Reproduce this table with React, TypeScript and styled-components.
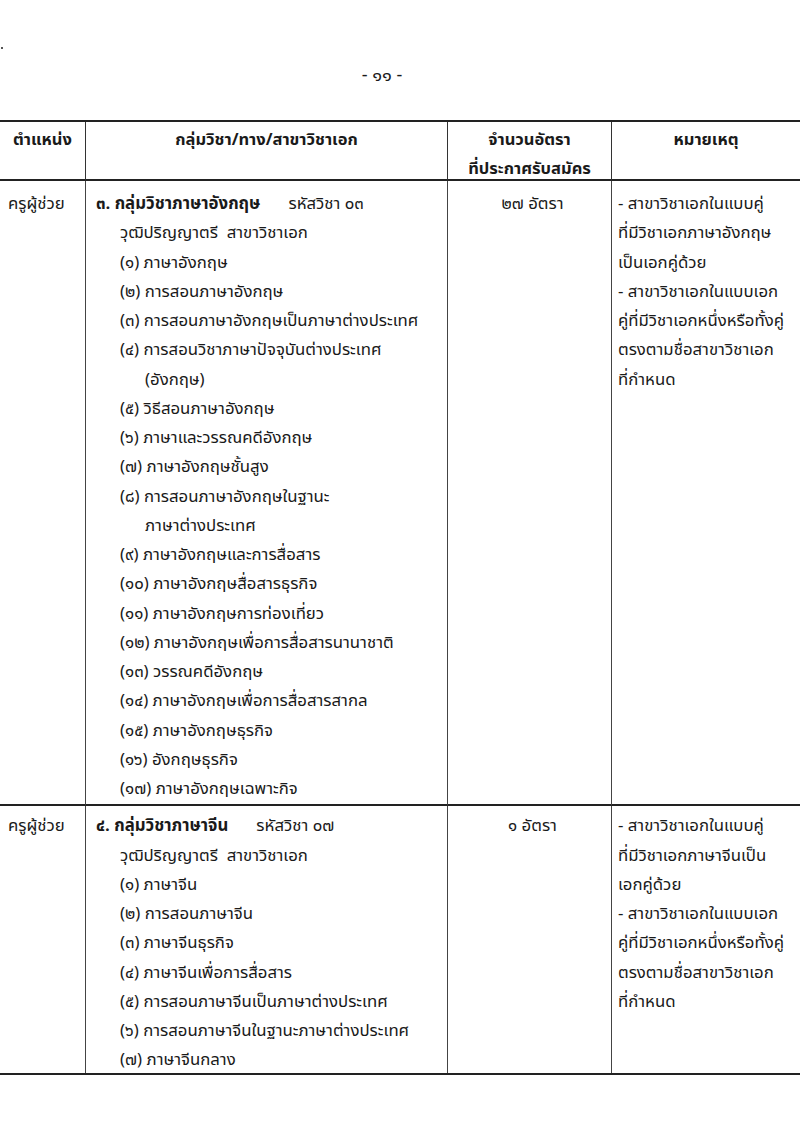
import React from "react";
import styled, { createGlobalStyle } from "styled-components";

const GlobalStyle = createGlobalStyle`
  html, body {
    margin: 0;
    padding: 0;
    background: #ffffff;
  }
  body {
    font-family: "Noto Sans Thai", "Noto Sans", "DejaVu Sans", sans-serif;
    color: #1a1a1a;
  }
`;

type Group = {
  position: string;
  heading: string;
  code: string;
  rate: string;
  lines: { text: string; wrap?: boolean }[];
  notes: string[];
};

const groups: Group[] = [
  {
    position: "ครูผู้ช่วย",
    heading: "๓. กลุ่มวิชาภาษาอังกฤษ",
    code: "รหัสวิชา ๐๓",
    rate: "๒๗ อัตรา",
    lines: [
      { text: "(๑) ภาษาอังกฤษ" },
      { text: "(๒) การสอนภาษาอังกฤษ" },
      { text: "(๓) การสอนภาษาอังกฤษเป็นภาษาต่างประเทศ" },
      { text: "(๔) การสอนวิชาภาษาปัจจุบันต่างประเทศ" },
      { text: "(อังกฤษ)", wrap: true },
      { text: "(๕) วิธีสอนภาษาอังกฤษ" },
      { text: "(๖) ภาษาและวรรณคดีอังกฤษ" },
      { text: "(๗) ภาษาอังกฤษชั้นสูง" },
      { text: "(๘) การสอนภาษาอังกฤษในฐานะ" },
      { text: "ภาษาต่างประเทศ", wrap: true },
      { text: "(๙) ภาษาอังกฤษและการสื่อสาร" },
      { text: "(๑๐) ภาษาอังกฤษสื่อสารธุรกิจ" },
      { text: "(๑๑) ภาษาอังกฤษการท่องเที่ยว" },
      { text: "(๑๒) ภาษาอังกฤษเพื่อการสื่อสารนานาชาติ" },
      { text: "(๑๓) วรรณคดีอังกฤษ" },
      { text: "(๑๔) ภาษาอังกฤษเพื่อการสื่อสารสากล" },
      { text: "(๑๕) ภาษาอังกฤษธุรกิจ" },
      { text: "(๑๖) อังกฤษธุรกิจ" },
      { text: "(๑๗) ภาษาอังกฤษเฉพาะกิจ" },
    ],
    notes: [
      "- สาขาวิชาเอกในแบบคู่",
      "ที่มีวิชาเอกภาษาอังกฤษ",
      "เป็นเอกคู่ด้วย",
      "- สาขาวิชาเอกในแบบเอก",
      "คู่ที่มีวิชาเอกหนึ่งหรือทั้งคู่",
      "ตรงตามชื่อสาขาวิชาเอก",
      "ที่กำหนด",
    ],
  },
  {
    position: "ครูผู้ช่วย",
    heading: "๔. กลุ่มวิชาภาษาจีน",
    code: "รหัสวิชา ๐๗",
    rate: "๑ อัตรา",
    lines: [
      { text: "(๑) ภาษาจีน" },
      { text: "(๒) การสอนภาษาจีน" },
      { text: "(๓) ภาษาจีนธุรกิจ" },
      { text: "(๔) ภาษาจีนเพื่อการสื่อสาร" },
      { text: "(๕) การสอนภาษาจีนเป็นภาษาต่างประเทศ" },
      { text: "(๖) การสอนภาษาจีนในฐานะภาษาต่างประเทศ" },
      { text: "(๗) ภาษาจีนกลาง" },
    ],
    notes: [
      "- สาขาวิชาเอกในแบบคู่",
      "ที่มีวิชาเอกภาษาจีนเป็น",
      "เอกคู่ด้วย",
      "- สาขาวิชาเอกในแบบเอก",
      "คู่ที่มีวิชาเอกหนึ่งหรือทั้งคู่",
      "ตรงตามชื่อสาขาวิชาเอก",
      "ที่กำหนด",
    ],
  },
];

const Page = styled.div`
  width: 800px;
  height: 1122px;
  overflow: hidden;
  position: relative;
  background: #fff;
`;

const Speck = styled.span`
  position: absolute;
  left: 1px;
  top: 47px;
  width: 2px;
  height: 2px;
  background: #555;
`;

const PageNumber = styled.div`
  height: 120px;
  padding-top: 63px;
  box-sizing: border-box;
  text-align: center;
  font-size: 18px;
  line-height: 26px;
  padding-right: 36px;
`;

const Table = styled.div`
  display: grid;
  grid-template-columns: 86px 362px 164px 188px;
  border-top: 2px solid #222;
  border-bottom: 2px solid #222;
`;

const HeadCell = styled.div<{ $last?: boolean }>`
  height: 59px;
  box-sizing: border-box;
  border-right: ${(p) => (p.$last ? "none" : "1.5px solid #333")};
  border-bottom: 2px solid #222;
  font-weight: 700;
  font-size: 16.5px;
  line-height: 29px;
  text-align: center;
  padding-top: 3px;
  white-space: nowrap;
`;

const Cell = styled.div<{
  $last?: boolean;
  $bottom?: boolean;
  $tight?: boolean;
  $align?: string;
}>`
  box-sizing: border-box;
  border-right: ${(p) => (p.$last ? "none" : "1.5px solid #444")};
  border-bottom: ${(p) => (p.$bottom ? "2px solid #222" : "none")};
  font-size: 16.8px;
  line-height: 29.25px;
  padding: ${(p) => (p.$tight ? "6px" : "9px")} 0 0 6px;
  text-align: ${(p) => p.$align ?? "left"};
  white-space: nowrap;

  & > :last-child {
    margin-bottom: ${(p) => (p.$tight ? "-3px" : "0")};
  }
`;

const Heading = styled.div`
  display: flex;
  gap: 28px;
  padding-left: 4px;
`;

const Bold = styled.span`
  font-weight: 700;
`;

const Line = styled.div<{ $wrap?: boolean }>`
  padding-left: ${(p) => (p.$wrap ? "53px" : "28px")};
`;

const Note = styled.div``;

export default function App() {
  return (
    <Page>
      <GlobalStyle />
      <Speck />
      <PageNumber>- ๑๑ -</PageNumber>
      <Table>
        <HeadCell>ตำแหน่ง</HeadCell>
        <HeadCell>กลุ่มวิชา/ทาง/สาขาวิชาเอก</HeadCell>
        <HeadCell>
          จำนวนอัตรา
          <br />
          ที่ประกาศรับสมัคร
        </HeadCell>
        <HeadCell $last>หมายเหตุ</HeadCell>
        {groups.map((g, i) => {
          const last = i === groups.length - 1;
          return (
            <React.Fragment key={g.heading}>
              <Cell $bottom={!last} $tight={last} style={{ paddingLeft: 8 }}>
                <div>{g.position}</div>
              </Cell>
              <Cell $bottom={!last} $tight={last}>
                <Heading>
                  <Bold>{g.heading}</Bold>
                  <span>{g.code}</span>
                </Heading>
                <Line>วุฒิปริญญาตรี&nbsp;&nbsp;สาขาวิชาเอก</Line>
                {g.lines.map((l) => (
                  <Line key={l.text} $wrap={l.wrap}>
                    {l.text}
                  </Line>
                ))}
              </Cell>
              <Cell $bottom={!last} $tight={last} $align="center">
                <div>{g.rate}</div>
              </Cell>
              <Cell $bottom={!last} $tight={last} $last>
                {g.notes.map((n) => (
                  <Note key={n}>{n}</Note>
                ))}
              </Cell>
            </React.Fragment>
          );
        })}
      </Table>
    </Page>
  );
}
